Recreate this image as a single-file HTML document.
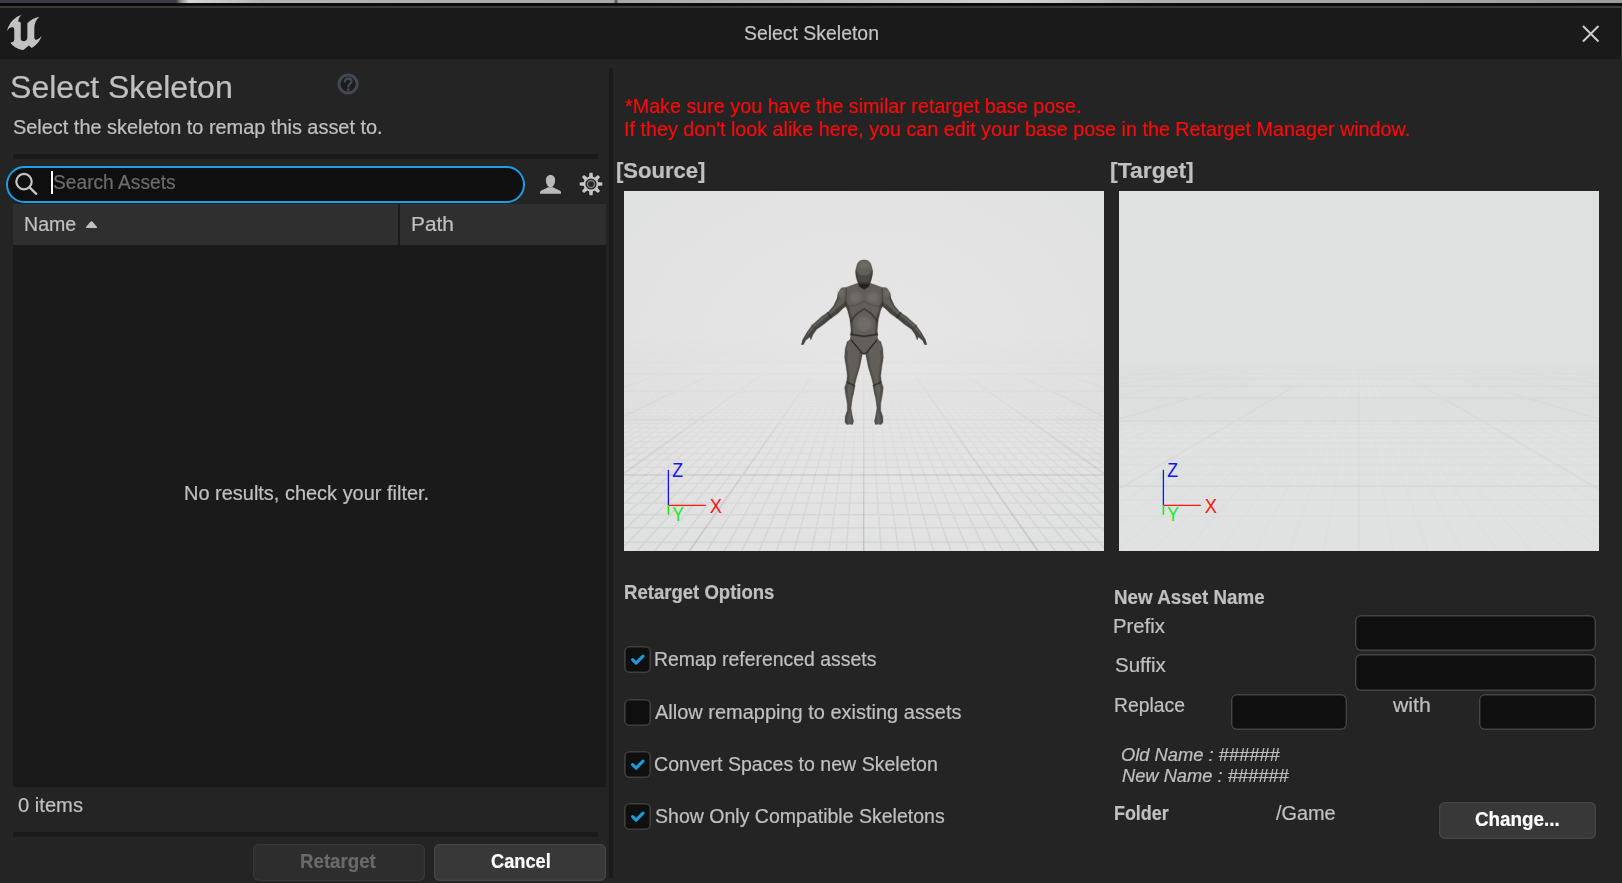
<!DOCTYPE html>
<html lang="en">
<head>
<meta charset="utf-8">
<title>Select Skeleton</title>
<style>
*{box-sizing:border-box;margin:0;padding:0}
html,body{width:1622px;height:883px;overflow:hidden;background:#242424}
body{position:relative;font-family:"Liberation Sans",sans-serif;color:#c0c0c0}
.abs,.t{position:absolute}
.t{white-space:nowrap;line-height:1;transform-origin:0 0;font-weight:400;-webkit-text-stroke:.2px}
.bleed{left:0;top:0;width:1622px;height:3px;background:linear-gradient(90deg,#393c44 0,#393c44 176px,#8d8f93 181px,#d6d6d6 189px,#b4b4b6 262px,#adadaf 450px,#a9a9ab 614px,#5a5a5c 615px,#5a5a5c 617px,#a9a9ab 618px,#c0c0c0 860px,#d2d2d2 1020px,#b0b0b2 1150px,#9b9c9e 1622px)}
.gap{left:0;top:3px;width:1622px;height:3px;background:#0b0b0b}
.titlebar{left:0;top:6px;width:1622px;height:53px;background:#1a1a1a;border-top:2px solid #3b3b3b;border-right:1px solid #333}
.vsep{left:609px;top:68px;width:4px;height:810px;background:#1b1b1b}
.hline{height:5px;background:#1a1a1a}
.search{left:6px;top:166px;width:519px;height:37px;border:2px solid #1d9ee2;border-radius:19px;background:#0f0f0f}
.caret{left:51px;top:171px;width:2px;height:23px;background:#fff}
.hdr{left:13px;top:204px;width:593px;height:41px;background:#2f2f2f}
.coldiv{left:398px;top:204px;width:2px;height:41px;background:#1a1a1a}
.list{left:13px;top:245px;width:593px;height:542px;background:#1a1a1a}
.btn{border-radius:6px;background:#383838;box-shadow:inset 0 0 0 1.3px #464646}
.btn.dis{background:#2d2d2d;box-shadow:inset 0 0 0 1.3px #373737}
.inp{background:#0f0f0f;box-shadow:inset 0 0 0 1.4px #444;border-radius:6px}
.cb{left:624px;width:27px;height:27px;background:#0f0f0f;box-shadow:inset 0 0 0 1.6px #3f3f3f;border-radius:5.5px}
.vp{top:191px;width:480px;height:360px;overflow:hidden}
</style>
</head>
<body>
<!-- window chrome -->
<div class="abs bleed"></div>
<div class="abs gap"></div>
<div class="abs titlebar"></div>
<svg class="abs" style="left:0;top:8px" width="60" height="50" viewBox="0 0 60 50"><g transform="translate(0,-8) scale(.07926)" fill="#c2c2c2"><path d="M270,188 C200,205 110,280 88,395 C105,355 140,335 165,345 C178,350 180,365 180,385 L180,495 C180,520 165,535 130,540 C170,590 230,625 295,632 L365,575 L400,605 C450,580 505,520 525,455 C500,490 465,505 448,500 C438,497 433,485 433,470 L433,350 C433,300 455,250 495,212 C440,222 385,255 345,292 L345,480 C345,500 320,520 300,522 C275,520 262,505 262,490 L262,285 L232,270 C228,250 240,215 270,188Z"/></g></svg>
<svg class="abs" style="left:1578px;top:21px" width="26" height="26" viewBox="0 0 26 26"><path d="M5 5 L20.5 20.5 M20.5 5 L5 20.5" stroke="#cdcdcd" stroke-width="2" fill="none"/></svg>
<div class="t" style="left:743.8px;top:22.8px;font-size:20px;color:#c4c4c4;transform:scaleX(0.971)">Select Skeleton</div>

<!-- left panel : asset picker -->
<h1 class="t" style="left:9.866px;top:72.2px;font-size:31px;color:#c0c0c0;transform:scaleX(1.034)">Select Skeleton</h1>
<svg class="abs" style="left:336px;top:72px" width="24" height="24" viewBox="0 0 24 24"><circle cx="12.1" cy="12" r="9.1" fill="#1c1c1c" stroke="#414856" stroke-width="3"/><path d="M8.9 9.6 C8.9 7.4 10.4 6.5 12.2 6.5 C14.2 6.5 15.5 7.6 15.5 9.3 C15.5 11.6 12.3 11.8 12.3 14.6" fill="none" stroke="#414856" stroke-width="2.4" stroke-linecap="round"/><circle cx="12.3" cy="17.7" r="1.4" fill="#414856"/></svg>
<div class="t" style="left:12.9px;top:118px;font-size:19.5px;color:#c0c0c0;transform:scaleX(1.021)">Select the skeleton to remap this asset to.</div>
<div class="abs hline" style="left:13px;top:154px;width:585px"></div>
<div class="abs search"></div>
<svg class="abs" style="left:12px;top:170px" width="28" height="28" viewBox="0 0 28 28"><circle cx="12" cy="11.6" r="7.7" fill="none" stroke="#c4c4c4" stroke-width="2.2"/><path d="M17.6 17.4 L24.2 23.8" stroke="#c4c4c4" stroke-width="2.4" stroke-linecap="round"/></svg>
<div class="abs caret"></div>
<div class="t" style="left:53.4px;top:172.2px;font-size:20px;color:#6c6c6c;transform:scaleX(0.959)">Search Assets</div>
<svg class="abs" style="left:538px;top:172px" width="26" height="26" viewBox="0 0 26 26"><defs><filter id="ub" x="-10%" y="-10%" width="120%" height="120%"><feGaussianBlur stdDeviation=".4"/></filter></defs><g fill="#bababa" filter="url(#ub)"><path d="M12.5 3.1 C15.2 3.1 17.1 5.2 17.1 8.2 C17.1 11.4 15.2 15.4 12.5 15.4 C9.8 15.4 7.9 11.4 7.9 8.2 C7.9 5.2 9.8 3.1 12.5 3.1Z"/><path d="M2 21.8 L2 19.8 C3.2 18 7.4 17 9.8 15.2 L15.2 15.2 C17.6 17 21.8 18 23 19.8 L23 21.8Z"/></g></svg>
<svg class="abs" style="left:578px;top:171px" width="26" height="26" viewBox="0 0 26 26"><path d="M15.00 6.50L14.55 1.70L11.45 1.70L11.00 6.50ZM19.01 9.82L22.09 6.11L19.89 3.91L16.18 6.99ZM19.50 15.00L24.30 14.55L24.30 11.45L19.50 11.00ZM16.18 19.01L19.89 22.09L22.09 19.89L19.01 16.18ZM11.00 19.50L11.45 24.30L14.55 24.30L15.00 19.50ZM6.99 16.18L3.91 19.89L6.11 22.09L9.82 19.01ZM6.50 11.00L1.70 11.45L1.70 14.55L6.50 15.00ZM9.82 6.99L6.11 3.91L3.91 6.11L6.99 9.82Z" fill="#c6c6c6"/><circle cx="13" cy="13" r="6.55" fill="none" stroke="#c6c6c6" stroke-width="1.9"/><circle cx="13" cy="13" r="3.55" fill="none" stroke="#808080" stroke-width="1.4"/></svg>
<div class="abs hdr"></div>
<div class="abs coldiv"></div>
<div class="t" style="left:23.722px;top:213.8px;font-size:20px;color:#c0c0c0;transform:scaleX(0.978)">Name</div>
<svg class="abs" style="left:85px;top:220px" width="13" height="9" viewBox="0 0 13 9"><path d="M1 6.9 L5.4 1.7 Q6.5 .7 7.6 1.7 L12 6.9 Q12.4 8 11.2 8 L1.8 8 Q.6 8 1 6.9Z" fill="#c0c0c0"/></svg>
<div class="t" style="left:410.757px;top:214.1px;font-size:20px;color:#c0c0c0;transform:scaleX(1.043)">Path</div>
<div class="abs list"></div>
<div class="t" style="left:183.602px;top:482.8px;font-size:20px;color:#c0c0c0;transform:scaleX(0.998)">No results, check your filter.</div>
<div class="t" style="left:18px;top:795.4px;font-size:20px;color:#c0c0c0;transform:scaleX(1.008)">0 items</div>
<div class="abs hline" style="left:13px;top:832px;width:585px"></div>
<div class="abs btn dis" style="left:253px;top:844px;width:172px;height:37px"></div>
<div class="t" style="left:300.466px;top:850.9px;font-size:20px;color:#6a6a6a;transform:scaleX(0.934);font-weight:700">Retarget</div>
<div class="abs btn" style="left:434px;top:844px;width:172px;height:37px"></div>
<div class="t" style="left:490.5px;top:850.9px;font-size:20px;color:#ffffff;transform:scaleX(0.91);font-weight:700">Cancel</div>
<div class="abs vsep"></div>

<!-- right panel -->
<div class="t" style="left:624.8px;top:95.9px;font-size:20px;color:#fb0a0a;transform:scaleX(0.987)">*Make sure you have the similar retarget base pose.</div>
<div class="t" style="left:623.813px;top:119.1px;font-size:20px;color:#fb0a0a;transform:scaleX(0.987)">If they don't look alike here, you can edit your base pose in the Retarget Manager window.</div>
<div class="t" style="left:616.02px;top:159.5px;font-size:22.5px;color:#c0c0c0;transform:scaleX(0.98);font-weight:700">[Source]</div>
<div class="t" style="left:1110.38px;top:159.5px;font-size:22.5px;color:#c0c0c0;transform:scaleX(1.02);font-weight:700">[Target]</div>
<div class="abs vp" style="left:624px"><svg width="480" height="360" viewBox="0 0 480 360" style="display:block">
<defs>
<radialGradient id="bg1" cx="50%" cy="45%" r="75%"><stop offset="0" stop-color="#e6e6e6"/><stop offset=".55" stop-color="#e3e3e3"/><stop offset="1" stop-color="#dfe0e0"/></radialGradient>
<linearGradient id="fd1" x1="0" y1="0" x2="0" y2="1"><stop offset=".405" stop-color="#fff" stop-opacity="0"/><stop offset=".52" stop-color="#fff" stop-opacity=".14"/><stop offset=".635" stop-color="#fff" stop-opacity=".32"/><stop offset=".8" stop-color="#fff" stop-opacity=".68"/><stop offset="1" stop-color="#fff" stop-opacity="1"/></linearGradient>
<mask id="mk1"><rect width="480" height="360" fill="url(#fd1)"/></mask>
<filter id="hb" x="-50%" y="-50%" width="200%" height="200%"><feGaussianBlur stdDeviation="16"/></filter>
<filter id="sf" x="-5%" y="-5%" width="110%" height="110%"><feGaussianBlur stdDeviation=".45"/></filter>
</defs>
<rect width="480" height="360" fill="url(#bg1)"/>
<g mask="url(#mk1)">
<path d="M45.1 131L0 135.6M46.5 131L0 135.8M47.9 131L0 136M49.3 131L0 136.2M50.7 131L0 136.4M52.1 131L0 136.6M53.5 131L0 136.7M54.9 131L0 136.9M56.3 131L0 137.1M59.1 131L0 137.5M60.5 131L0 137.8M61.9 131L0 138M63.3 131L0 138.2M64.7 131L0 138.4M66.1 131L0 138.6M67.5 131L0 138.8M68.9 131L0 139.1M70.3 131L0 139.3M73.1 131L0 139.8M74.5 131L0 140M75.9 131L0 140.3M77.3 131L0 140.5M78.7 131L0 140.8M80.1 131L0 141M81.5 131L0 141.3M82.9 131L0 141.6M84.3 131L0 141.8M87.1 131L0 142.4M88.5 131L0 142.7M89.9 131L0 143M91.3 131L0 143.3M92.7 131L0 143.6M94.1 131L0 143.9M95.5 131L0 144.2M96.9 131L0 144.6M98.3 131L0 144.9M101.1 131L0 145.6M102.5 131L0 145.9M103.9 131L0 146.3M105.3 131L0 146.7M106.7 131L0 147M108.1 131L0 147.4M109.5 131L0 147.8M110.9 131L0 148.2M112.3 131L0 148.6M115.1 131L0 149.5M116.5 131L0 149.9M117.9 131L0 150.4M119.3 131L0 150.8M120.7 131L0 151.3M122.1 131L0 151.8M123.5 131L0 152.3M124.9 131L0 152.8M126.3 131L0 153.3M129.1 131L0 154.3M130.5 131L0 154.9M131.9 131L0 155.5M133.3 131L0 156.1M134.7 131L0 156.7M136.1 131L0 157.3M137.5 131L0 157.9M138.9 131L0 158.6M140.3 131L0 159.2M143.1 131L0 160.6M144.5 131L0 161.4M145.9 131L0 162.1M147.3 131L0 162.9M148.7 131L0 163.7M150.1 131L0 164.5M151.5 131L0 165.4M152.9 131L0 166.2M154.3 131L0 167.1M157.1 131L0 169M158.5 131L0 170M159.9 131L0 171.1M161.3 131L0 172.1M162.7 131L0 173.3M164.1 131L0 174.4M165.5 131L0 175.6M166.9 131L0 176.9M168.3 131L0 178.1M171.1 131L0 180.9M172.5 131L0 182.3M173.9 131L0 183.9M175.3 131L0 185.4M176.7 131L0 187.1M178.1 131L0 188.8M179.5 131L0 190.6M180.9 131L0 192.5M182.3 131L0 194.5M185.1 131L0 198.8M186.5 131L0 201.1M187.9 131L0 203.5M189.3 131L0 206.1M190.7 131L0 208.8M192.1 131L0 211.7M193.5 131L0 214.8M194.9 131L0 218M196.3 131L0 221.5M199.1 131L0 229.1M200.5 131L0 233.3M201.9 131L0 237.8M203.3 131L0 242.7M204.7 131L0 248M206.1 131L0 253.7M207.5 131L0 259.9M208.9 131L0 266.6M210.3 131L0 274.1M213.1 131L0 291.2M214.5 131L0 301.2M215.9 131L0 312.4M217.3 131L0 325M218.7 131L0 339.3M220.1 131L0 355.6M221.5 131L13.1 360M222.9 131L30.5 360M224.3 131L48 360M227.1 131L82.8 360M228.5 131L100.3 360M229.9 131L117.7 360M231.3 131L135.1 360M232.7 131L152.5 360M234.1 131L170 360M235.5 131L187.4 360M236.9 131L204.8 360M238.3 131L222.3 360M241.1 131L257.1 360M242.5 131L274.6 360M243.9 131L292 360M245.3 131L309.4 360M246.7 131L326.9 360M248.1 131L344.3 360M249.5 131L361.7 360M250.9 131L379.1 360M252.3 131L396.6 360M255.1 131L431.4 360M256.5 131L448.9 360M257.9 131L466.3 360M259.3 131L480 356.2M260.7 131L480 339.9M262.1 131L480 325.6M263.5 131L480 312.9M264.9 131L480 301.7M266.3 131L480 291.7M269.1 131L480 274.5M270.5 131L480 267M271.9 131L480 260.3M273.3 131L480 254M274.7 131L480 248.3M276.1 131L480 243M277.5 131L480 238.1M278.9 131L480 233.6M280.3 131L480 229.4M283.1 131L480 221.7M284.5 131L480 218.3M285.9 131L480 215M287.3 131L480 212M288.7 131L480 209.1M290.1 131L480 206.4M291.5 131L480 203.8M292.9 131L480 201.3M294.3 131L480 199M297.1 131L480 194.7M298.5 131L480 192.7M299.9 131L480 190.8M301.3 131L480 189M302.7 131L480 187.3M304.1 131L480 185.6M305.5 131L480 184M306.9 131L480 182.5M308.3 131L480 181.1M311.1 131L480 178.3M312.5 131L480 177M313.9 131L480 175.8M315.3 131L480 174.6M316.7 131L480 173.4M318.1 131L480 172.3M319.5 131L480 171.2M320.9 131L480 170.2M322.3 131L480 169.2M325.1 131L480 167.3M326.5 131L480 166.4M327.9 131L480 165.5M329.3 131L480 164.6M330.7 131L480 163.8M332.1 131L480 163M333.5 131L480 162.2M334.9 131L480 161.5M336.3 131L480 160.8M339.1 131L480 159.4M340.5 131L480 158.7M341.9 131L480 158M343.3 131L480 157.4M344.7 131L480 156.8M346.1 131L480 156.2M347.5 131L480 155.6M348.9 131L480 155M350.3 131L480 154.5M353.1 131L480 153.4M354.5 131L480 152.9M355.9 131L480 152.4M357.3 131L480 151.9M358.7 131L480 151.4M360.1 131L480 150.9M361.5 131L480 150.5M362.9 131L480 150M364.3 131L480 149.6M367.1 131L480 148.7M368.5 131L480 148.3M369.9 131L480 147.9M371.3 131L480 147.5M372.7 131L480 147.1M374.1 131L480 146.8M375.5 131L480 146.4M376.9 131L480 146M378.3 131L480 145.7M381.1 131L480 145M382.5 131L480 144.7M383.9 131L480 144.3M385.3 131L480 144M386.7 131L480 143.7M388.1 131L480 143.4M389.5 131L480 143.1M390.9 131L480 142.8M392.3 131L480 142.5M395.1 131L480 141.9M396.5 131L480 141.7M397.9 131L480 141.4M399.3 131L480 141.1M400.7 131L480 140.9M402.1 131L480 140.6M403.5 131L480 140.3M404.9 131L480 140.1M406.3 131L480 139.8M409.1 131L480 139.4M410.5 131L480 139.1M411.9 131L480 138.9M413.3 131L480 138.7M414.7 131L480 138.5M416.1 131L480 138.2M417.5 131L480 138M418.9 131L480 137.8M420.3 131L480 137.6M423.1 131L480 137.2M424.5 131L480 137M425.9 131L480 136.8M427.3 131L480 136.6M428.7 131L480 136.4M430.1 131L480 136.2M431.5 131L480 136.1M432.9 131L480 135.9M434.3 131L480 135.7M0 351.3H480M0 336.7H480M0 323.7H480M0 312.1H480M0 301.7H480M0 292.4H480M0 276.2H480M0 269.1H480M0 262.6H480M0 256.7H480M0 251.1H480M0 246H480M0 241.3H480M0 236.8H480M0 232.7H480M0 225.2H480M0 221.7H480M0 218.5H480M0 215.5H480M0 212.6H480M0 209.9H480M0 207.3H480M0 204.9H480M0 202.5H480M0 198.2H480M0 196.2H480M0 194.3H480M0 192.5H480M0 190.7H480M0 189H480" stroke="#000" stroke-opacity=".058" stroke-width="1.5" fill="none"/>
<path d="M161.3 119L0 135.5M166.9 119L0 137.3M172.5 119L0 139.5M178.1 119L0 142.1M183.7 119L0 145.2M189.3 119L0 149M194.9 119L0 153.8M200.5 119L0 159.9M206.1 119L0 168.1M211.7 119L0 179.5M217.3 119L0 196.6M222.9 119L0 225.1M228.5 119L0 282.2M234.1 119L65.4 360M245.3 119L414 360M250.9 119L480 282.6M256.5 119L480 225.4M262.1 119L480 196.8M267.7 119L480 179.7M273.3 119L480 168.2M278.9 119L480 160M284.5 119L480 153.9M290.1 119L480 149.1M295.7 119L480 145.3M301.3 119L480 142.2M306.9 119L480 139.6M312.5 119L480 137.4M318.1 119L480 135.5M0 283.9H480M0 228.8H480M0 200.3H480M0 182.9H480M0 171.2H480M0 162.8H480M0 156.4H480M0 151.5H480M0 147.5H480M0 144.2H480M0 141.5H480M0 139.1H480M0 137.1H480M0 135.4H480M0 133.9H480M0 132.6H480M0 131.4H480M0 130.3H480M0 129.4H480M0 128.5H480M0 127.7H480M0 127H480M0 126.3H480M0 125.7H480M0 125.1H480M0 124.6H480M0 124.1H480M0 123.7H480M0 123.3H480M0 122.9H480M0 122.5H480M0 122.2H480M0 121.8H480M0 121.5H480M0 121.2H480M0 121H480M0 120.7H480M0 120.4H480M0 120.2H480M0 120H480" stroke="#000" stroke-opacity=".1" stroke-width="2" fill="none"/>
<path d="M239.7 117V360" stroke="#5f8f5f" stroke-opacity=".3" stroke-width="1.4"/>
</g>
<g filter="url(#sf)">
<g transform="translate(191,144) scale(.10764)">
<g fill="#625f5a">
<path id="lgL" d="M330,0 L330,40 L300,60 L280,130 L275,210 L290,300 L300,380 L292,440 L275,490 L285,560 L300,640 L300,700 L280,760 L278,810 L295,832 L350,832 L358,800 L345,740 L335,680 L345,600 L360,520 L370,460 L385,400 L415,300 L435,200 L442,172 L455,178 L455,0Z"/>
<use href="#lgL" transform="translate(910,0) scale(-1,1)"/>
</g>
<g fill="#4b4844" opacity=".75">
<path id="lsL" d="M300,60 L280,130 L275,210 L290,300 L300,380 L292,440 L275,490 L285,560 L300,640 L300,700 L280,760 L278,810 L295,832 L310,832 L300,800 L318,700 L318,640 L305,560 L300,490 L318,440 L322,380 L310,300 L298,210 L305,130 L330,60Z"/>
<use href="#lsL" transform="translate(910,0) scale(-1,1)"/>
<path id="liL" d="M442,172 L435,200 L415,300 L385,400 L370,460 L360,520 L345,600 L335,680 L345,740 L358,800 L350,832 L338,832 L335,740 L322,680 L332,600 L345,520 L352,460 L368,400 L395,300 L412,200 L420,160Z"/>
<use href="#liL" transform="translate(910,0) scale(-1,1)"/>
</g>
<g fill="none" stroke="#24231f" stroke-linecap="round" stroke-linejoin="round">
<path d="M338,34 L388,92 L432,166 L455,176 L478,166 L522,92 L572,34" stroke-width="13" opacity=".9"/>
<path d="M298,438 L366,470 M612,438 L544,470" stroke-width="12" opacity=".8"/>
<path d="M372,470 L352,560 M538,470 L558,560" stroke-width="7" opacity=".55"/>
</g>
</g>
<g transform="translate(171,64) scale(.10761)">
<g fill="#625f5a">
<path id="arL" d="M480,298 L430,305 L400,350 L392,400 L360,470 L310,530 L250,570 L160,650 L110,720 L70,790 L58,836 L80,832 L100,792 L138,762 L148,792 L166,742 L200,692 L270,642 L330,592 L400,542 L450,492 L486,470 L500,380Z"/>
<use href="#arL" transform="translate(1284,0) scale(-1,1)"/>
<path d="M575,262 L480,298 L468,360 L470,470 L490,520 L510,600 L520,700 L515,745 L520,762 L500,800 L478,883 L806,883 L784,800 L764,762 L769,745 L764,700 L774,600 L794,520 L814,470 L816,360 L804,298 L709,262Z"/>
<path d="M642,45 C600,45 575,70 570,110 L562,150 C562,180 570,215 580,245 L600,290 L684,290 L704,245 C714,215 722,180 722,150 L714,110 C709,70 684,45 642,45Z"/>
</g>
<g fill="#3b3936" opacity=".7">
<path id="auL" d="M400,350 L392,400 L360,470 L310,530 L250,570 L160,650 L110,720 L70,790 L58,836 L80,832 L100,792 L138,762 L148,792 L166,742 L200,692 L270,642 L330,592 L400,542 L450,492 L486,470 L476,430 L420,470 L340,540 L260,600 L180,670 L130,730 L90,790 L120,720 L170,650 L260,570 L320,530 L370,470 L410,400Z"/>
<use href="#auL" transform="translate(1284,0) scale(-1,1)"/>
<path d="M470,470 L490,520 L510,600 L520,700 L515,745 L540,745 L535,600 L510,520 L486,440Z M814,470 L794,520 L774,600 L764,700 L769,745 L744,745 L749,600 L774,520 L798,440Z"/>
<path d="M570,110 L562,150 C562,180 570,215 580,245 L600,290 L684,290 L704,245 C714,215 722,180 722,150 L714,110 C712,170 700,220 684,250 L600,250 C584,220 572,170 570,110Z"/>
</g>
<path d="M566,150 C566,185 574,220 584,246 L600,290 L684,290 L700,246 C710,220 718,185 718,150 C700,175 680,190 642,190 C604,190 584,175 566,150Z" fill="#33312e" opacity=".5"/>
<path d="M582,255 L600,296 L642,322 L684,296 L702,255 L684,268 L600,268Z" fill="#1f1e1c" opacity=".9"/>
<g fill="#7d7a75" opacity=".5" filter="url(#hb)"><ellipse cx="562" cy="395" rx="58" ry="52"/><ellipse cx="722" cy="395" rx="58" ry="52"/><ellipse cx="642" cy="640" rx="72" ry="70"/><ellipse cx="642" cy="95" rx="48" ry="36"/><ellipse cx="432" cy="352" rx="24" ry="36"/><ellipse cx="852" cy="352" rx="24" ry="36"/></g>
<g fill="none" stroke="#24231f" stroke-linecap="round" stroke-linejoin="round">
<path d="M520,612 L578,542 L642,500 L706,542 L764,612" stroke-width="11" opacity=".9"/>
<path d="M520,738 L642,756 L764,738" stroke-width="14" opacity=".9"/>
<path d="M524,792 L600,883 M760,792 L684,883" stroke-width="12" opacity=".9"/>
<path d="M476,312 L470,468 M808,312 L814,468" stroke-width="9" opacity=".55"/>
<path d="M484,478 L560,470 L642,430 L724,470 L800,478" stroke-width="7" opacity=".4"/>
<path d="M302,536 L338,582 M982,536 L946,582" stroke-width="13" opacity=".7"/>
<path d="M154,652 L186,684 M1130,652 L1098,684" stroke-width="9" opacity=".55"/>
</g>
</g>
</g>

<g font-family="Liberation Sans, sans-serif" font-size="19.5">
<path d="M44.4 278.8V314.3" stroke="#1212ff" stroke-width="1.3"/>
<path d="M44.4 314.3H81.8" stroke="#ff1212" stroke-width="1.3"/>
<path d="M44.4 314.3V323.8" stroke="#12f012" stroke-width="1.6"/>
<text x="48.3" y="285.6" fill="#1515ff" textLength="10.8" lengthAdjust="spacingAndGlyphs">Z</text>
<text x="85.8" y="321.8" fill="#ff1515" textLength="12.2" lengthAdjust="spacingAndGlyphs">X</text>
<text x="48.3" y="330" fill="#15ee15" textLength="11.6" lengthAdjust="spacingAndGlyphs">Y</text>
</g>
</svg></div>
<div class="abs vp" style="left:1119px"><svg width="480" height="360" viewBox="0 0 480 360" style="display:block">
<defs>
<linearGradient id="fd2" x1="0" y1="0" x2="0" y2="1"><stop offset=".46" stop-color="#fff" stop-opacity="0"/><stop offset=".56" stop-color="#fff" stop-opacity=".7"/><stop offset="1" stop-color="#fff" stop-opacity="1"/></linearGradient>
<mask id="mk2"><rect width="480" height="360" fill="url(#fd2)"/></mask>
</defs>
<rect width="480" height="360" fill="#e0e1e1"/>
<g mask="url(#mk2)">
<path d="M2.3 172L0 172.1M4.7 172L0 172.3M7.1 172L0 172.4M9.5 172L0 172.6M11.9 172L0 172.7M14.3 172L0 172.9M16.7 172L0 173M19.1 172L0 173.2M21.5 172L0 173.4M26.3 172L0 173.7M28.7 172L0 173.9M31.1 172L0 174.1M33.5 172L0 174.3M35.9 172L0 174.5M38.3 172L0 174.7M40.7 172L0 174.9M43.1 172L0 175.1M45.5 172L0 175.3M50.3 172L0 175.7M52.7 172L0 175.9M55.1 172L0 176.2M57.5 172L0 176.4M59.8 172L0 176.7M62.2 172L0 176.9M64.6 172L0 177.2M67 172L0 177.4M69.4 172L0 177.7M74.2 172L0 178.3M76.6 172L0 178.6M79 172L0 178.9M81.4 172L0 179.2M83.8 172L0 179.5M86.2 172L0 179.9M88.6 172L0 180.2M91 172L0 180.6M93.4 172L0 180.9M98.2 172L0 181.7M100.6 172L0 182.1M103 172L0 182.6M105.4 172L0 183M107.8 172L0 183.4M110.2 172L0 183.9M112.6 172L0 184.4M115 172L0 184.9M117.4 172L0 185.4M122.2 172L0 186.6M124.6 172L0 187.2M127 172L0 187.8M129.4 172L0 188.4M131.8 172L0 189.1M134.2 172L0 189.8M136.6 172L0 190.5M139 172L0 191.3M141.4 172L0 192.1M146.2 172L0 193.9M148.6 172L0 194.8M151 172L0 195.8M153.4 172L0 196.9M155.8 172L0 198M158.2 172L0 199.2M160.6 172L0 200.4M163 172L0 201.7M165.4 172L0 203.1M170.2 172L0 206.3M172.6 172L0 208M175 172L0 209.8M177.4 172L0 211.8M179.7 172L0 214M182.1 172L0 216.3M184.5 172L0 218.8M186.9 172L0 221.6M189.3 172L0 224.6M194.1 172L0 231.7M196.5 172L0 235.7M198.9 172L0 240.3M201.3 172L0 245.5M203.7 172L0 251.3M206.1 172L0 258M208.5 172L0 265.6M210.9 172L0 274.6M213.3 172L0 285.2M218.1 172L0 313.5M220.5 172L0 332.9M222.9 172L0 357.9M225.3 172L32.1 360M227.7 172L66.7 360M230.1 172L101.3 360M232.5 172L135.9 360M234.9 172L170.5 360M237.3 172L205.1 360M242.1 172L274.3 360M244.5 172L308.9 360M246.9 172L343.5 360M249.3 172L378.1 360M251.7 172L412.7 360M254.1 172L447.3 360M256.5 172L480 358.4M258.9 172L480 333.4M261.3 172L480 313.9M266.1 172L480 285.5M268.5 172L480 274.9M270.9 172L480 265.9M273.3 172L480 258.2M275.7 172L480 251.5M278.1 172L480 245.7M280.5 172L480 240.5M282.9 172L480 235.9M285.3 172L480 231.8M290.1 172L480 224.8M292.5 172L480 221.8M294.9 172L480 219M297.3 172L480 216.5M299.7 172L480 214.1M302 172L480 212M304.4 172L480 210M306.8 172L480 208.1M309.2 172L480 206.4M314 172L480 203.3M316.4 172L480 201.8M318.8 172L480 200.5M321.2 172L480 199.3M323.6 172L480 198.1M326 172L480 197M328.4 172L480 195.9M330.8 172L480 194.9M333.2 172L480 194M338 172L480 192.2M340.4 172L480 191.4M342.8 172L480 190.6M345.2 172L480 189.9M347.6 172L480 189.2M350 172L480 188.5M352.4 172L480 187.8M354.8 172L480 187.2M357.2 172L480 186.6M362 172L480 185.5M364.4 172L480 185M366.8 172L480 184.5M369.2 172L480 184M371.6 172L480 183.5M374 172L480 183.1M376.4 172L480 182.6M378.8 172L480 182.2M381.2 172L480 181.8M386 172L480 181M388.4 172L480 180.6M390.8 172L480 180.3M393.2 172L480 179.9M395.6 172L480 179.6M398 172L480 179.3M400.4 172L480 178.9M402.8 172L480 178.6M405.2 172L480 178.3M410 172L480 177.8M412.4 172L480 177.5M414.8 172L480 177.2M417.2 172L480 177M419.6 172L480 176.7M421.9 172L480 176.5M424.3 172L480 176.2M426.7 172L480 176M429.1 172L480 175.8M433.9 172L480 175.3M436.3 172L480 175.1M438.7 172L480 174.9M441.1 172L480 174.7M443.5 172L480 174.5M445.9 172L480 174.3M448.3 172L480 174.1M450.7 172L480 173.9M453.1 172L480 173.8M457.9 172L480 173.4M460.3 172L480 173.2M462.7 172L480 173.1M465.1 172L480 172.9M467.5 172L480 172.8M469.9 172L480 172.6M472.3 172L480 172.5M474.7 172L480 172.3M477.1 172L480 172.2M0 325.3H480M0 308.7H480M0 283.6H480M0 274H480M0 265.7H480M0 258.6H480M0 252.3H480M0 246.8H480M0 241.9H480M0 237.5H480M0 233.5H480M0 226.6H480M0 223.7H480M0 220.9H480M0 218.4H480M0 216.1H480M0 213.9H480M0 212H480M0 210.1H480M0 208.4H480" stroke="#000" stroke-opacity=".017" stroke-width="1.5" fill="none"/>
<path d="M102.7 166L0 172M116.4 166L0 173.5M130.1 166L0 175.5M143.8 166L0 178M157.5 166L0 181.3M171.2 166L0 186M184.9 166L0 193M198.6 166L0 204.6M212.3 166L0 228M226 166L0 297.9M253.4 166L480 298.3M267.1 166L480 228.1M280.8 166L480 204.8M294.5 166L480 193.1M308.2 166L480 186.1M321.9 166L480 181.4M335.6 166L480 178M349.3 166L480 175.5M363 166L480 173.6M376.7 166L480 172M0 295H480M0 229.9H480M0 206.7H480M0 194.9H480M0 187.6H480M0 182.8H480M0 179.3H480M0 176.7H480M0 174.6H480M0 173H480M0 171.6H480M0 170.5H480M0 169.5H480M0 168.7H480M0 168H480M0 167.4H480M0 166.8H480M0 166.4H480" stroke="#000" stroke-opacity=".03" stroke-width="2" fill="none"/>
<path d="M239.7 164V360" stroke="#000" stroke-opacity=".035" stroke-width="1.4"/>
</g>
<g font-family="Liberation Sans, sans-serif" font-size="19.5">
<path d="M44.4 278.8V314.3" stroke="#1212ff" stroke-width="1.3"/>
<path d="M44.4 314.3H81.8" stroke="#ff1212" stroke-width="1.3"/>
<path d="M44.4 314.3V323.8" stroke="#12f012" stroke-width="1.6"/>
<text x="48.3" y="285.6" fill="#1515ff" textLength="10.8" lengthAdjust="spacingAndGlyphs">Z</text>
<text x="85.8" y="321.8" fill="#ff1515" textLength="12.2" lengthAdjust="spacingAndGlyphs">X</text>
<text x="48.3" y="330" fill="#15ee15" textLength="11.6" lengthAdjust="spacingAndGlyphs">Y</text>
</g>
</svg></div>

<div class="t" style="left:624.449px;top:583.1px;font-size:19.5px;color:#c0c0c0;transform:scaleX(0.951);font-weight:700">Retarget Options</div>
<div class="abs cb" style="top:646px"><svg style="position:absolute;left:0;top:0" width="27" height="27" viewBox="0 0 27 27"><path d="M8.6 13.7 L12.1 17.2 L19 10.1" fill="none" stroke="#1d9bd8" stroke-width="3.1" stroke-linecap="round" stroke-linejoin="round"/></svg></div>
<div class="t" style="left:654.229px;top:648.7px;font-size:20px;color:#c0c0c0;transform:scaleX(0.971)">Remap referenced assets</div>
<div class="abs cb" style="top:699px"></div>
<div class="t" style="left:655.2px;top:701.7px;font-size:20px;color:#c0c0c0;transform:scaleX(0.999)">Allow remapping to existing assets</div>
<div class="abs cb" style="top:751px"><svg style="position:absolute;left:0;top:0" width="27" height="27" viewBox="0 0 27 27"><path d="M8.6 13.7 L12.1 17.2 L19 10.1" fill="none" stroke="#1d9bd8" stroke-width="3.1" stroke-linecap="round" stroke-linejoin="round"/></svg></div>
<div class="t" style="left:654.222px;top:753.7px;font-size:20px;color:#c0c0c0;transform:scaleX(0.978)">Convert Spaces to new Skeleton</div>
<div class="abs cb" style="top:803px"><svg style="position:absolute;left:0;top:0" width="27" height="27" viewBox="0 0 27 27"><path d="M8.6 13.7 L12.1 17.2 L19 10.1" fill="none" stroke="#1d9bd8" stroke-width="3.1" stroke-linecap="round" stroke-linejoin="round"/></svg></div>
<div class="t" style="left:655.2px;top:806px;font-size:20px;color:#c0c0c0;transform:scaleX(0.976)">Show Only Compatible Skeletons</div>

<div class="t" style="left:1113.537px;top:588px;font-size:19.5px;color:#c0c0c0;transform:scaleX(0.963);font-weight:700">New Asset Name</div>
<div class="t" style="left:1113.486px;top:615.9px;font-size:20px;color:#c0c0c0;transform:scaleX(1.014)">Prefix</div>
<div class="abs inp" style="left:1355px;top:615px;width:241px;height:36px"></div>
<div class="t" style="left:1114.5px;top:654.5px;font-size:20px;color:#c0c0c0;transform:scaleX(1.023)">Suffix</div>
<div class="abs inp" style="left:1355px;top:654px;width:241px;height:37px"></div>
<div class="t" style="left:1113.534px;top:694.8px;font-size:20px;color:#c0c0c0;transform:scaleX(0.966)">Replace</div>
<div class="abs inp" style="left:1231px;top:694px;width:116px;height:36px"></div>
<div class="t" style="left:1393.264px;top:694.8px;font-size:20px;color:#c0c0c0;transform:scaleX(1.064)">with</div>
<div class="abs inp" style="left:1479px;top:694px;width:117px;height:36px"></div>
<div class="t" style="left:1120.911px;top:746.2px;font-size:18.5px;color:#c0c0c0;transform:scaleX(0.989);font-style:italic">Old Name : ######</div>
<div class="t" style="left:1121.9px;top:767.1px;font-size:18.5px;color:#c0c0c0;transform:scaleX(0.988);font-style:italic">New Name : ######</div>
<div class="t" style="left:1113.605px;top:803.1px;font-size:20px;color:#c0c0c0;transform:scaleX(0.895);font-weight:700">Folder</div>
<div class="t" style="left:1276.4px;top:803.1px;font-size:20px;color:#c0c0c0;transform:scaleX(0.993)">/Game</div>
<div class="abs btn" style="left:1439px;top:802px;width:157px;height:37px"></div>
<div class="t" style="left:1474.9px;top:808.9px;font-size:20px;color:#ffffff;transform:scaleX(0.942);font-weight:700">Change...</div>
</body>
</html>
